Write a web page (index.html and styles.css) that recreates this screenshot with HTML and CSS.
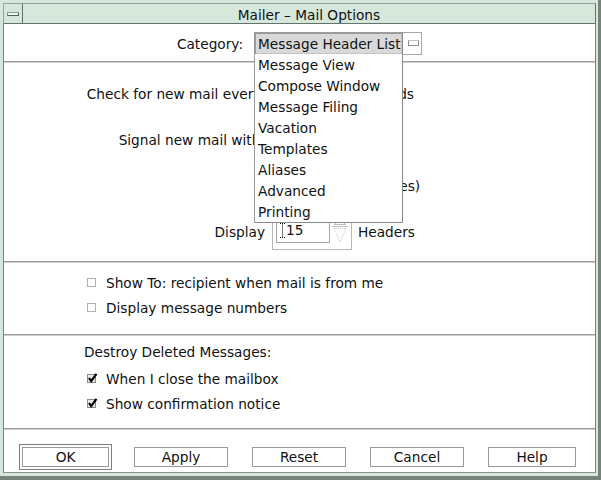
FILE: index.html
```html
<!DOCTYPE html>
<html>
<head>
<meta charset="utf-8">
<title>Mailer – Mail Options</title>
<link rel="stylesheet" href="styles.css">
</head>
<body>
<div class="frame">
  <div class="titlebar">
    <div class="wm-menu"><span class="wm-dash"></span></div>
    <div class="title">Mailer – Mail Options</div>
  </div>
  <div class="content">
    <div class="category-row">
      <span class="cat-label">Category:</span>
      <div class="option">
        <span class="option-value">Message Header List</span>
        <span class="option-ind"></span>
        <ul class="menu">
          <li class="selected">Message Header List</li>
          <li>Message View</li>
          <li>Compose Window</li>
          <li>Message Filing</li>
          <li>Vacation</li>
          <li>Templates</li>
          <li>Aliases</li>
          <li>Advanced</li>
          <li>Printing</li>
        </ul>
      </div>
    </div>
    <div class="sep"></div>
    <div class="general">
      <span class="glabel">Check for new mail every:</span>
      <div class="spin"><div class="field"><span class="val">300</span></div><svg class="arrows" width="18" height="25" viewBox="0 0 18 25"><path d="M3 6.5 L9 1.5 L15 6.5 Z" fill="none" stroke="#bdbdbd"/><path d="M1 8.5 H17" stroke="#bdbdbd"/><path d="M3 10.5 H15 L9 24 Z" fill="none" stroke="#c4c4c4" stroke-dasharray="1 1"/></svg></div>
      <span class="unit">seconds</span>

      <span class="glabel">Signal new mail with:</span>
      <div class="spin"><div class="field"><span class="val">1</span></div><svg class="arrows" width="18" height="25" viewBox="0 0 18 25"><path d="M3 6.5 L9 1.5 L15 6.5 Z" fill="none" stroke="#bdbdbd"/><path d="M1 8.5 H17" stroke="#bdbdbd"/><path d="M3 10.5 H15 L9 24 Z" fill="none" stroke="#c4c4c4" stroke-dasharray="1 1"/></svg></div>
      <span class="unit">Beep</span>

      <span class="glabel"></span>
      <div class="spin"><div class="field"><span class="val">0</span></div><svg class="arrows" width="18" height="25" viewBox="0 0 18 25"><path d="M3 6.5 L9 1.5 L15 6.5 Z" fill="none" stroke="#bdbdbd"/><path d="M1 8.5 H17" stroke="#bdbdbd"/><path d="M3 10.5 H15 L9 24 Z" fill="none" stroke="#c4c4c4" stroke-dasharray="1 1"/></svg></div>
      <span class="unit">Flash(es)</span>

      <span class="glabel">Display</span>
      <div class="spin"><div class="field"><svg class="ibeam" width="5" height="15" viewBox="0 0 5 15"><path d="M0 0.5 H5 M2.5 0.5 V14.5 M0 14.5 H5" stroke="#000" stroke-width="1" stroke-dasharray="1 1" fill="none"/></svg><span class="val">15</span></div><svg class="arrows" width="18" height="25" viewBox="0 0 18 25"><path d="M3 6.5 L9 1.5 L15 6.5 Z" fill="none" stroke="#bdbdbd"/><path d="M1 8.5 H17" stroke="#bdbdbd"/><path d="M3 10.5 H15 L9 24 Z" fill="none" stroke="#c4c4c4" stroke-dasharray="1 1"/></svg></div>
      <span class="unit">Headers</span>
    </div>
    <div class="sep"></div>
    <div class="checks">
      <div class="crow"><svg class="cb" width="11" height="11" viewBox="0 0 11 11"><rect x="0.5" y="1.5" width="8" height="8" fill="#fff" stroke="#b0b0b0"/></svg><span>Show To: recipient when mail is from me</span></div>
      <div class="crow"><svg class="cb" width="11" height="11" viewBox="0 0 11 11"><rect x="0.5" y="1.5" width="8" height="8" fill="#fff" stroke="#b0b0b0"/></svg><span>Display message numbers</span></div>
    </div>
    <div class="sep"></div>
    <div class="destroy">
      <div class="dlabel">Destroy Deleted Messages:</div>
      <div class="crow"><svg class="cb" width="11" height="11" viewBox="0 0 11 11"><rect x="0.5" y="1.5" width="8" height="8" fill="#e8e8e8" stroke="#8a8a8a"/><path d="M2 5 L4.2 8.2 L9.5 0.8" fill="none" stroke="#000" stroke-width="2.2"/></svg><span>When I close the mailbox</span></div>
      <div class="crow"><svg class="cb" width="11" height="11" viewBox="0 0 11 11"><rect x="0.5" y="1.5" width="8" height="8" fill="#e8e8e8" stroke="#8a8a8a"/><path d="M2 5 L4.2 8.2 L9.5 0.8" fill="none" stroke="#000" stroke-width="2.2"/></svg><span>Show confirmation notice</span></div>
    </div>
    <div class="sep"></div>
    <div class="btnrow">
      <div class="default"><div class="btn ok">OK</div></div>
      <div class="btn">Apply</div>
      <div class="btn">Reset</div>
      <div class="btn">Cancel</div>
      <div class="btn help">Help</div>
    </div>
  </div>
</div>
</body>
</html>
```
FILE: styles.css
```css
* { box-sizing: border-box; }
html, body { margin: 0; padding: 0; }
body {
  width: 601px;
  height: 480px;
  overflow: hidden;
  background: #d6e8dc;
  font-family: "DejaVu Sans", sans-serif;
  font-size: 13.7px;
  color: #111;
}
.frame {
  width: 601px;
  height: 480px;
  display: flex;
  flex-direction: column;
  padding: 3px 2px 3px 3px;
  border-right: 3px solid #76847a;
  border-bottom: 4px solid #76847a;
  background: #d6e8dc;
}
.titlebar {
  height: 21px;
  flex: none;
  display: flex;
  border: 1px solid #95a39a;
  border-right-color: #66736a;
  border-bottom-color: #66736a;
  background: #d6e8dc;
}
.wm-menu {
  width: 19px;
  border-right: 1px solid #66736a;
  display: flex;
  align-items: center;
  justify-content: center;
}
.wm-dash {
  width: 12px;
  height: 4px;
  border: 1px solid #8f9b93;
  border-bottom-color: #56605a;
  border-right-color: #56605a;
  background: #eef6f0;
}
.title {
  flex: 1;
  text-align: center;
  line-height: 19px;
  padding-top: 2px;
}
.content {
  flex: 1;
  background: #fff;
  border-left: 1px solid #76847a;
  border-right: 1px solid #76847a;
  border-bottom: 1px solid #8a968e;
  display: flex;
  flex-direction: column;
}
.sep {
  height: 2px;
  flex: none;
  border-top: 1px solid #9a9a9a;
  border-bottom: 1px solid #cfcfcf;
}
.category-row {
  height: 37px;
  flex: none;
  padding-top: 8px;
  display: flex;
  justify-content: center;
  align-items: flex-start;
  gap: 11px;
}
.cat-label { line-height: 24px; }
.option {
  position: relative;
  width: 168px;
  height: 23px;
  border: 1px solid #a8a8a8;
  display: flex;
  align-items: center;
  padding-left: 3px;
}
.option-value { white-space: nowrap; width: 147px; }
.option-ind {
  width: 11px;
  height: 6px;
  border: 1px solid #909090;
  border-top-color: #c0c0c0;
  margin-left: 3px;
  margin-top: -2px;
}
.menu {
  position: absolute;
  left: -1px;
  top: -1px;
  z-index: 10;
  width: 149px;
  margin: 0;
  padding: 0;
  list-style: none;
  background: #fff;
  border: 1px solid #9c9c9c;
  border-right-color: #8a8a8a;
  border-bottom-color: #8a8a8a;
}
.menu li {
  height: 21px;
  line-height: 22px;
  padding-left: 3px;
  white-space: nowrap;
}
.menu li.selected {
  background: #d9d9d9;
  box-shadow: inset 1px 1px 0 #9a9a9a, inset -1px -1px 0 #c4c4c4;
}
.general {
  flex: none;
  display: grid;
  grid-template-columns: 261px 80px auto;
  grid-auto-rows: 36px;
  column-gap: 7px;
  row-gap: 10px;
  padding: 13px 0 11px;
}
.glabel {
  justify-self: end;
  align-self: center;
  white-space: nowrap;
  margin-top: -1px;
}
.unit {
  align-self: center;
  white-space: nowrap;
  margin-left: -1px;
  margin-top: -1px;
}
.spin {
  width: 80px;
  height: 36px;
  border: 1px solid #b8b8b8;
  padding: 3px 0 0 3px;
  display: flex;
  align-items: flex-start;
}
.field {
  width: 54px;
  height: 25px;
  border: 1px solid #a8a8a8;
  display: flex;
  align-items: center;
  padding-left: 3px;
}
.ibeam { margin-right: 1px; flex: none; }
.val { line-height: 1; }
.arrows { margin-left: 1px; flex: none; }
.checks {
  flex: none;
  padding: 7px 0 14px;
}
.crow {
  height: 25px;
  display: flex;
  align-items: center;
  padding-left: 83px;
  white-space: nowrap;
}
.cb { flex: none; margin-right: 8px; margin-top: -1px; }
.destroy {
  flex: none;
  padding: 6px 0 12px;
}
.dlabel {
  line-height: 20px;
  padding-left: 80px;
  margin-bottom: 4px;
}
.btnrow {
  height: 26px;
  margin-top: 14px;
  padding-left: 15px;
  display: flex;
  align-items: center;
  gap: 24px;
}
.default {
  width: 93px;
  height: 26px;
  border: 1px solid #7e7e7e;
  padding: 2px;
  margin-right: -2px;
}
.btn {
  width: 94px;
  height: 20px;
  border: 1px solid #9a9a9a;
  background: #fff;
  display: flex;
  align-items: center;
  justify-content: center;
  line-height: 1;
  padding-top: 1px;
}
.btn.ok { width: 87px; height: 20px; }
.btn.help { width: 88px; }
```
